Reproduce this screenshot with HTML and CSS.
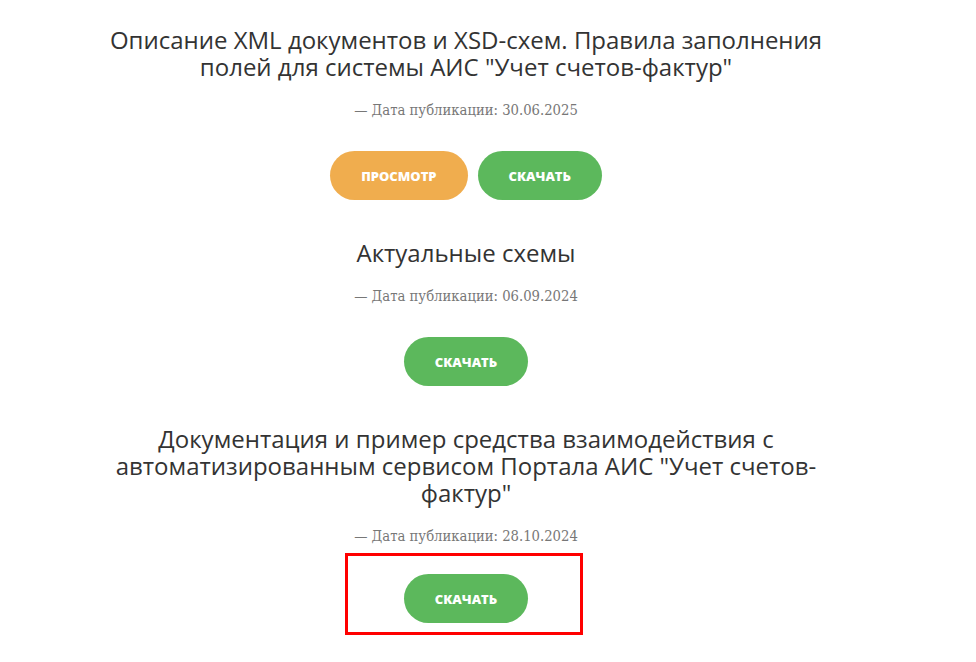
FILE: index.html
```html
<!DOCTYPE html>
<html lang="ru">
<head>
<meta charset="UTF-8">
<meta name="viewport" content="width=device-width, initial-scale=1.0">
<title>Документы</title>
<link rel="stylesheet" href="styles.css">
</head>
<body>
  <div class="container">

    <div class="doc">
      <h3 class="doc-title">Описание XML документов и XSD-схем. Правила заполнения полей для системы АИС "Учет счетов-фактур"</h3>
      <p class="doc-date">— Дата публикации: 30.06.2025</p>
      <div class="doc-buttons">
        <a href="#" class="btn btn-view">Просмотр</a>
        <a href="#" class="btn btn-download">Скачать</a>
      </div>
    </div>

    <div class="doc">
      <h3 class="doc-title">Актуальные схемы</h3>
      <p class="doc-date">— Дата публикации: 06.09.2024</p>
      <div class="doc-buttons">
        <a href="#" class="btn btn-download">Скачать</a>
      </div>
    </div>

    <div class="doc">
      <h3 class="doc-title">Документация и пример средства взаимодействия с автоматизированным сервисом Портала АИС "Учет счетов-фактур"</h3>
      <p class="doc-date">— Дата публикации: 28.10.2024</p>
      <div class="doc-buttons highlight">
        <a href="#" class="btn btn-download">Скачать</a>
      </div>
    </div>

  </div>
</body>
</html>
```

FILE: styles.css
```css
body {
  margin: 0;
  padding: 0;
  background: #fff;
  font-family: "Open Sans", Arial, sans-serif;
  color: #333;
}

.container {
  width: 932px;
  padding-top: 26px;
  display: flex;
  flex-direction: column;
  align-items: center;
}

.doc {
  display: flex;
  flex-direction: column;
  align-items: center;
  margin-bottom: 39px;
}

.doc-title {
  max-width: 720px;
  margin: 0;
  font-size: 24px;
  font-weight: 400;
  line-height: 27px;
  text-align: center;
  color: #333;
}

.doc-date {
  margin: 21px 0 0;
  font-family: "DejaVu Serif Condensed", "Liberation Serif", serif;
  font-size: 14.7px;
  line-height: 18px;
  color: #777;
}

.doc-buttons {
  display: flex;
  gap: 10px;
  margin-top: 32px;
}

.btn {
  display: inline-flex;
  align-items: center;
  justify-content: center;
  height: 49px;
  padding: 0 31px;
  border-radius: 25px;
  font-size: 13px;
  font-weight: 800;
  text-transform: uppercase;
  text-decoration: none;
  color: #fff;
}

.btn-view {
  background-color: #f0ad4e;
}

.btn-download {
  background-color: #5cb85c;
}

.highlight {
  margin-top: 8px;
  margin-right: 4px;
  padding: 18px 52px 9px 56px;
  border: 3px solid #f00;
}
```
